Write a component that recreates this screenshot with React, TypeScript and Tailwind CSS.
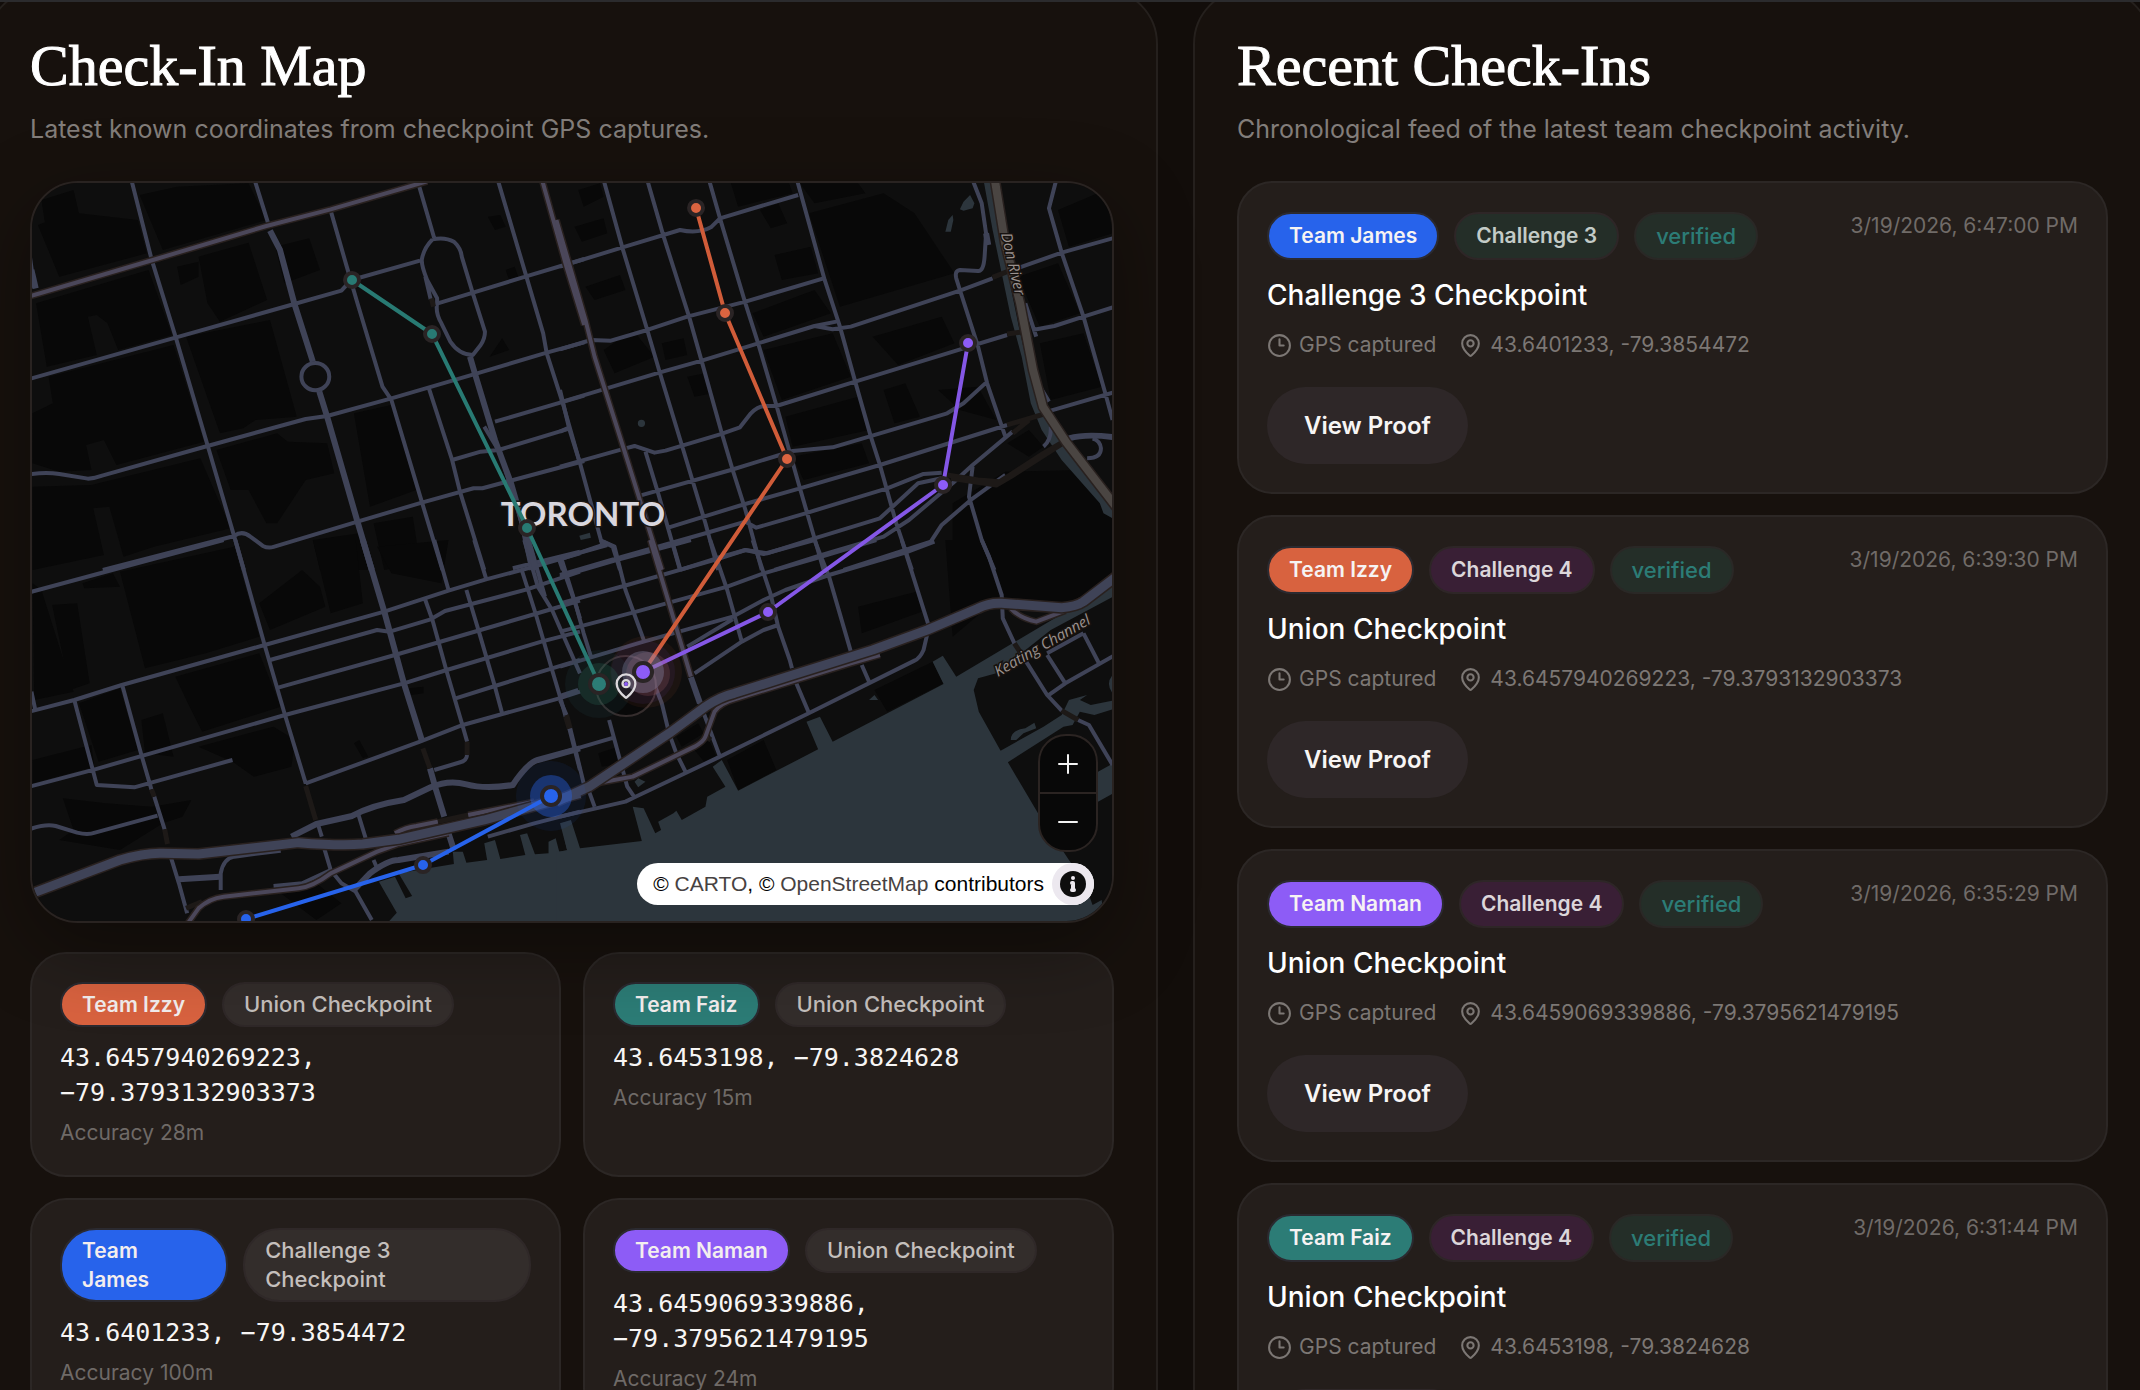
import React from "react";
import { Clock3, MapPin } from "lucide-react";

/* ---------- Data ---------- */

type TeamName = "Team Izzy" | "Team Faiz" | "Team James" | "Team Naman";

const teamColor: Record<TeamName, string> = {
  "Team Izzy": "bg-[#d8623f]",
  "Team Faiz": "bg-[#2c7c76]",
  "Team James": "bg-[#2763eb]",
  "Team Naman": "bg-[#8d5cf6]",
};

const positions: { team: TeamName; place: string; coords: string; accuracy: string }[] = [
  { team: "Team Izzy", place: "Union Checkpoint", coords: "43.6457940269223, −79.3793132903373", accuracy: "Accuracy 28m" },
  { team: "Team Faiz", place: "Union Checkpoint", coords: "43.6453198, −79.3824628", accuracy: "Accuracy 15m" },
  { team: "Team James", place: "Challenge 3 Checkpoint", coords: "43.6401233, −79.3854472", accuracy: "Accuracy 100m" },
  { team: "Team Naman", place: "Union Checkpoint", coords: "43.6459069339886, −79.3795621479195", accuracy: "Accuracy 24m" },
];

const checkIns: { team: TeamName; challenge: 3 | 4; title: string; coords: string; time: string }[] = [
  { team: "Team James", challenge: 3, title: "Challenge 3 Checkpoint", coords: "43.6401233, -79.3854472", time: "3/19/2026, 6:47:00 PM" },
  { team: "Team Izzy", challenge: 4, title: "Union Checkpoint", coords: "43.6457940269223, -79.3793132903373", time: "3/19/2026, 6:39:30 PM" },
  { team: "Team Naman", challenge: 4, title: "Union Checkpoint", coords: "43.6459069339886, -79.3795621479195", time: "3/19/2026, 6:35:29 PM" },
  { team: "Team Faiz", challenge: 4, title: "Union Checkpoint", coords: "43.6453198, -79.3824628", time: "3/19/2026, 6:31:44 PM" },
];

/* ---------- Map drawing ---------- */

interface Tile {
  transform: string;
  blocks: string;
  water: string;
  street: string;
  avenue: string;
  arterial: string;
  highway: string;
  bridge: string;
}

const tiles: Tile[] = [
  {
    transform: "translate(20 170) scale(0.3571 0.3333)",
    blocks:
      "M45 400L360 300 425 495 275 540 245 460 215 435 190 440 215 555 75 590ZM80 620L430 525 515 815 270 885 235 810 185 825 200 900 110 905 35 880 35 730 92 700ZM35 950L200 945 505 865 590 1075 375 1130 290 1160 250 1010 205 1015 235 1155 35 1200ZM500 260L640 218 692 390 560 455 525 400ZM50 165L110 140 165 130 330 150 355 250 110 320ZM335 75L440 50 640 40 690 150 400 240ZM935 730L1040 705 1110 960 980 1010ZM465 500L700 450 775 740 660 750 625 775 560 790ZM715 230L810 205 840 300 740 340ZM1310 140L1345 135 1360 170 1330 180ZM550 840L720 790 750 815 860 820 880 910 800 930 720 1060 690 1060 640 960 590 960ZM60 90L150 60 165 130 70 160ZM1360 300L1385 290 1395 320 1370 330ZM1315 560L1350 505 1370 540ZM820 1110L950 1090 975 1200 840 1200ZM990 1060L1100 1040 1120 1180 1020 1200ZM440 290L500 275 500 320 450 345Z",
    water: "",
    street:
      "M312 30L367 262 372 280 437 505 525 825 600 1100 627 1200M657 30L695 160M870 122L915 290 945 400 1015 650 1040 690 1125 995 1183 1200M20 629L435 503 768 402 900 362 928 330 1120 272M20 914Q70 905 110 912T190 926Q210 925 230 917L525 828 800 747 860 738 1040 685 1280 610 1475 548 1580 517M232 1200L600 1098Q622 1080 645 1100L680 1128Q695 1136 710 1131L945 1055 1125 998 1270 955 1295 955 1580 873M1118 50L1160 205M1155 208Q1190 200 1215 215 1235 235 1237 260L1268 370 1302 485Q1302 505 1290 525L1268 555Q1230 555 1205 515L1180 460Q1163 430 1168 400L1168 385 1140 330Q1125 290 1125 270 1130 235 1155 208M1135 320L1150 388M1170 400L1415 320 1580 267M1338 30L1418 320 1465 490 1475 550 1520 700 1568 880M1145 655L1210 870 1232 965 1300 1200M1210 870L1290 845 1340 840 1540 775M1330 755L1580 677M1300 770L1345 850 1400 1040 1432 1200M1510 1170L1520 1200M1380 1195L1568 1145M20 200L40 355M788 620a39 41 0 1 0 78 0a39 41 0 1 0 -78 0",
    avenue: "M700 182L728 240 768 400 820 575M838 664L860 740 945 1055 985 1200M1260 560L1275 615 1330 810 1375 940 1445 1200M32 300L44 355",
    arterial: "M20 381L372 270 690 168 870 118 1140 34M1462 30L1530 290 1580 465",
    highway: "",
    bridge: "M1152 385L1158 410",
  },
  {
    transform: "translate(560 170) scale(0.3635 0.3333)",
    blocks:
      "M1080 1000L1225 905 1430 900 1520 1020 1520 1200 1080 1200ZM685 130L890 70 975 130 1085 310 770 410ZM550 120L600 100 625 160 580 175ZM70 350L165 315 180 360 95 390ZM590 255L690 230 710 310 610 330ZM530 430L700 360 745 430 560 500ZM560 540L750 490 800 620 610 690ZM620 740L820 680 850 780 640 830ZM860 500L1050 440 1085 520 930 585ZM890 660L950 640 990 740 920 760ZM1260 320L1370 280 1430 430 1320 470ZM1320 520L1440 490 1490 650 1350 690ZM470 40L630 40 640 70 490 110ZM50 60L110 40 120 80 65 110ZM120 540L200 480 260 560 150 610ZM1230 820L1290 780 1330 830 1290 860ZM40 170L120 145 130 190 60 215ZM280 520L340 505 350 555 290 570ZM660 40L820 40 840 70 700 100ZM640 860L830 820 850 880 670 930ZM350 620L400 610 420 670 370 680ZM1370 120L1500 60 1520 190 1400 230ZM1040 660L1150 650 1200 750 1100 720Z",
    water:
      "M1100 118L1110 95 1128 75 1140 100 1135 115 1110 122ZM1060 185L1068 150 1080 135 1082 150 1075 185ZM214 760a10 11 0 1 0 20 0a10 11 0 1 0 -20 0ZM53 1097L82 1088 85 1103 57 1110ZM1165 30L1195 30 1215 220 1262 470 1300 650 1340 750 1400 850 1500 980 1520 1010 1520 1045 1495 1030 1485 1000 1380 870 1325 780 1295 700 1270 560 1240 440 1190 180Z",
    street:
      "M120 30L172 235 240 480 275 610 335 825 400 1060 435 1200M240 30L285 200 355 440 390 575 445 790 475 900 510 1020 555 1200M410 30L440 145 510 400 545 520 595 705 660 955 700 1105 725 1200M652 30L728 330 770 470 812 635 855 800 880 885 925 1060 968 1200M0 290L172 232 330 180Q380 192 415 172L440 145 655 75M0 538L85 510 140 512 240 480 350 440 510 395 725 325M0 697L275 607 390 572 545 520 700 468 760 455M700 468L750 478 800 470 1100 362 1190 325M1265 292L1380 248 1530 202M0 890L180 835 205 828 260 848 290 842 440 793 495 772 525 730Q545 708 565 708L595 708 812 635 1110 535 1230 495M1300 480L1360 468 1440 440 1530 409M220 977L470 900 640 843 750 832 850 800 1065 730 1110 700 1175 635M0 785L20 775M0 660L25 775 55 880 115 1120M300 1072L500 1005 660 955 880 885 1230 765M1350 722L1530 665M0 1168L130 1120M110 1110L145 1130 165 1200M0 1215L155 1165 400 1090 510 1055 540 1073 675 1030 900 955 1000 912 1050 908M330 1200L430 1165 510 1140 570 1150 700 1105 880 1045 985 940 1050 925M590 1200L720 1155 890 1100 960 1050 1080 940 1135 885 1245 785M780 1200L950 1140 1020 1115 1050 1065 1130 990 1225 915M235 845L270 970 330 1200M1135 30L1160 100 1172 190 1168 260Q1165 305 1150 303L1100 300Q1085 302 1090 325L1100 360 1150 530 1175 640 1225 800M1135 890L1125 980 1160 1110 1195 1200M1365 30L1345 115 1380 248 1440 440 1500 670 1520 750M1280 400L1310 500M1315 640L1345 695M1450 865Q1488 865 1488 835 1486 812 1465 806M1350 770Q1352 810 1330 830",
    avenue: "M1400 805Q1450 790 1530 803M1172 190L1178 225",
    arterial: "M-10 150L70 450 95 560 185 870 280 1200",
    highway: "",
    bridge: "M1190 322L1265 290M1230 492L1295 483M1230 765L1345 728M1065 915L1150 930 1210 935 1260 900 1330 850 1400 805M1075 925L1200 945 1240 920 1390 815M1245 790L1290 750",
  },
  {
    transform: "translate(20 540) scale(0.3571 0.3333)",
    blocks:
      "M280 95L600 20 670 290 520 340 350 385ZM35 130L60 150 150 455 40 480ZM435 410L670 340 730 500 510 575 470 490ZM500 620L710 560 770 600 760 680 655 710 595 665ZM165 490L280 445 330 630 220 665ZM35 660L200 615 208 680 35 730ZM120 775L240 790 370 800 480 780 455 830 400 850 280 930 110 900 150 870ZM90 195L160 190 195 430 140 450ZM820 0L940 0 960 190 870 220ZM670 190L790 90 840 140 855 200 700 270ZM1000 20L1200 0 1180 130 1040 100ZM340 540L400 520 430 650 350 640ZM175 130L260 100 280 140 180 145ZM935 610L950 600 975 650 960 655ZM1090 445L1130 440 1130 460 1095 465ZM730 1060L830 1030 900 1090 830 1140Z",
    water:
      "M1020 1160L1055 1118 1005 1025 1050 1010 1080 1075 1098 1068 1060 1000 1215 972 1212 935 1240 935 1250 968 1308 960 1300 910 1330 900 1345 957 1415 945 1400 885 1420 880 1442 943 1480 940 1480 905 1500 895 1510 935 1532 930 1515 850 1540 845 1560 935 1570 935 1570 1160Z",
    street:
      "M20 159L570 0M603 0L685 315 742 525 800 730M1160 0L1200 150M1272 0L1305 115M20 517L152 480 285 435 685 315 1020 215 1200 152 1305 118 1440 80 1568 40M32 455L42 505M700 360L1000 270 1035 275 1150 238 1190 213 1420 148 1568 95M725 442L1050 345 1280 273 1480 210 1568 182M20 742L210 688 742 525 1075 430 1195 390 1460 305 1568 275M1220 475L1330 438 1490 385 1568 360M800 730L1120 605 1240 555 1510 475 1568 455M1135 180L1155 240 1195 395 1240 560 1252 605M1252 645Q1250 662 1235 666L1160 690M1250 150L1285 275 1330 440 1350 520M1405 90L1445 225 1490 390 1515 480 1528 530M1538 565L1568 690M1412 0L1450 140 1490 210 1568 400M1425 0L1470 170M1518 62L1568 235M152 480L215 735 320 742 360 730 595 660M287 438L340 645 368 748M376 770L405 868M422 950L445 1030 468 1120M20 870Q70 850 100 858L160 878Q190 886 210 878L385 827M835 855L845 890M852 925L870 990 900 1030 940 1055 985 1140M948 825L968 895M562 1050L562 1000Q570 955 600 950L730 932M990 960L1000 985M1310 890L1440 850 1568 815M710 1038L790 1030 870 990",
    avenue:
      "M960 0L1020 215 1075 430 1125 600M1148 685L1165 750 1188 830M1200 880L1215 930M760 890L830 852 930 828Q985 795 1075 780L1150 742Q1200 718 1250 733T1380 735Q1420 670 1450 660L1568 625M445 1018L560 1010M935 1050L980 1000Q1030 960 1060 960L1200 935",
    arterial: "M470 1150L500 1105Q530 1075 570 1070L780 1045Q820 1040 870 1000L1000 935 1060 912 1200 880M1050 880Q1080 862 1110 858L1170 845M1255 825L1440 785",
    highway: "M40 1058L280 960Q350 938 400 940L500 942 780 908Q900 918 960 912L1060 898 1300 840 1568 760",
    bridge: "M1128 625L1148 685M1252 605L1252 645M1528 530L1538 565M368 748L376 770M405 868L413 912M800 738L828 840M1170 845L1255 825M465 1105L510 1085",
  },
  {
    transform: "translate(560 540) scale(0.3635 0.3333)",
    blocks:
      "M1060 0L1520 0 1520 110 1400 190 1210 170 1080 290ZM820 200L980 155 995 215 830 280ZM460 660L560 600 595 690 490 750ZM865 450L1025 365 1055 430 900 515ZM370 630L410 600 430 650 400 670ZM320 590L380 550 395 580 335 620ZM105 640L160 620 170 670 115 680Z",
    water:
      "M-10 1160L-10 935 20 933 0 850 30 840 55 925 225 903 200 800 230 805 262 880 278 870 270 845 312 820 320 812 335 840 400 800 405 770 455 740 420 680 445 660 490 752 710 628 678 545 715 530 750 605 1055 432 1025 365 1053 347 1090 410 1530 125 1530 165 1350 270 1200 400 1150 415 1138 450 1152 515 1212 632 1330 560 1380 525 1400 480 1450 465 1430 480 1460 495 1530 480 1530 505 1470 525 1430 515 1410 555 1385 560 1232 667 1315 820 1400 960 1440 1020 1465 1095 1490 1080 1500 1160ZM1480 695L1530 665 1530 755 1480 785ZM1240 600Q1240 570 1280 565L1305 548 1310 565 1275 580 1255 600ZM205 725L215 715 235 725 215 742ZM850 480L865 465 875 480ZM1520 405Q1500 430 1520 460Z",
    street:
      "M360 412L385 490 440 650M0 55L130 15M110 0L150 20 180 150 232 305M0 110L155 60 310 15 360 0M0 60L45 200 65 280 85 350M0 190L185 135 440 55 510 30 560 42 700 0M0 275L210 215 460 140 560 100 720 50 870 0M0 380L230 305 475 230 560 180 620 150 740 105 950 38 1030 5M0 468L50 450M310 10L330 85M413 0L460 150 500 305M530 0L580 165 600 260 632 360 638 385M650 430L685 520M700 0L740 110 800 335M940 0L1015 260 1000 330Q990 355 975 362L680 522 440 650 205 772 180 785 0 830M370 400L500 305 560 270 600 255M350 320L475 238M1160 0L1180 50 1215 165 1218 235 1250 310M1265 335L1340 465 1380 512M1425 540L1455 555 1520 675M0 640L150 592M0 480L18 525M28 565L65 730M135 540L185 740 205 772M262 440L280 490 300 580 320 640 345 695M80 755L95 800M1345 465L1390 430 1530 343M1440 280L1485 375M1340 345L1390 430M1340 340L1440 280M830 375L850 425",
    avenue: "M360 412L385 490",
    arterial: "M248 0L360 410M100 730L200 710 370 620Q395 605 400 590L425 515Q440 490 480 478L800 370 880 345M1240 205Q1265 235 1310 245L1390 212",
    highway: "M-10 785L80 740 300 580 400 500Q440 470 480 460L640 405 860 330 1010 270 1150 205Q1180 188 1215 190L1380 203Q1420 200 1440 185L1530 110",
    bridge: "M1250 310L1265 335M1380 512L1425 540M18 525L28 565M400 590L415 600",
  },
];

const strokes: { key: "street" | "avenue" | "arterial" | "highway" | "bridge"; color: string; width: number }[] = [
  { key: "street", color: "#3f4357", width: 4 },
  { key: "avenue", color: "#3f4357", width: 6 },
  { key: "bridge", color: "#1d1917", width: 5 },
  { key: "arterial", color: "#29211f", width: 7 },
  { key: "arterial", color: "#4b475a", width: 4 },
  { key: "highway", color: "#29211f", width: 12 },
  { key: "highway", color: "#3f4357", width: 9 },
];

const routes = [
  { color: "#287a73", points: [[352, 280], [432, 334], [527, 528], [599, 684]] },
  { color: "#d05c39", points: [[696, 208], [725, 313], [787, 459], [643, 672]] },
  { color: "#8457e6", points: [[968, 343], [943, 485], [768, 612], [643, 672]] },
  { color: "#2763eb", points: [[246, 919], [423, 865], [551, 796]] },
];

const stops = [
  { color: "#287a73", at: [[352, 280], [432, 334], [527, 528]] },
  { color: "#dc6440", at: [[696, 208], [725, 313], [787, 459]] },
  { color: "#8d5cf6", at: [[968, 343], [943, 485], [768, 612]] },
  { color: "#2763eb", at: [[246, 919], [423, 865]] },
];

function CityMap() {
  return (
    <svg viewBox="32 183 1080 738" preserveAspectRatio="xMidYMid slice" className="block h-full w-full" role="img" aria-label="Map of downtown Toronto with team routes">
      <rect x="0" y="150" width="1160" height="800" fill="#0e0e0e" />
      {tiles.map((t) => (
        <path key={t.transform} transform={t.transform} d={t.blocks} fill="#080808" />
      ))}
      {tiles.map((t) => (
        <path key={t.transform} transform={t.transform} d={t.water} fill="#2c353c" />
      ))}
      {strokes.map((s, i) =>
        tiles.map((t) => (
          <path
            key={t.transform + i}
            transform={t.transform}
            d={t[s.key]}
            fill="none"
            stroke={s.color}
            strokeWidth={s.width}
            strokeLinejoin="round"
            vectorEffect="non-scaling-stroke"
          />
        )),
      )}
      <path d="M994 175L1005 243 1020 303 1033 370 1043 407 1066 442 1120 512" fill="none" stroke="#29211f" strokeWidth="11" />
      <path d="M994 175L1005 243 1020 303 1033 370 1043 407 1066 442 1120 512" fill="none" stroke="#4a4542" strokeWidth="8" />
      <circle cx="626" cy="686" r="30" fill="#080808" stroke="#352d2d" strokeWidth="2" />

      <g fontFamily="'Open Sans', 'Noto Sans', sans-serif" fontStyle="italic" fontSize="15" fill="#9a918e" stroke="#17120f" strokeWidth="3" paintOrder="stroke">
        <text transform="translate(1001 234) rotate(77)">Don River</text>
        <text transform="translate(998 677) rotate(-30)">Keating Channel</text>
      </g>
      <text x="583" y="526" textAnchor="middle" fontFamily="Lato, sans-serif" fontWeight="700" fontSize="33" fill="#d9d7de" stroke="#1a1615" strokeWidth="3" paintOrder="stroke">
        TORONTO
      </text>

      {routes.map((r) => (
        <polyline key={r.color} points={r.points.map((p) => p.join(",")).join(" ")} fill="none" stroke={r.color} strokeWidth="4" strokeLinejoin="round" />
      ))}
      {stops.map((s) =>
        s.at.map(([x, y]) => <circle key={`${x}-${y}`} cx={x} cy={y} r="7" fill={s.color} stroke="#2a2425" strokeWidth="4" />),
      )}

      <circle cx="646" cy="672" r="36" fill="#d8623f" opacity="0.07" />
      <circle cx="648" cy="674" r="22" fill="#b86a6a" opacity="0.2" />
      <circle cx="643" cy="672" r="32" fill="#8d5cf6" opacity="0.07" />
      <circle cx="643" cy="672" r="21" fill="#8d8cb0" opacity="0.35" />
      <circle cx="599" cy="684" r="34" fill="#2c5c66" opacity="0.12" />
      <circle cx="599" cy="684" r="21" fill="#2c7c66" opacity="0.22" />
      <circle cx="551" cy="796" r="35" fill="#2763eb" opacity="0.08" />
      <circle cx="551" cy="796" r="21" fill="#2763eb" opacity="0.4" />
      <circle cx="599" cy="684" r="9" fill="#2c7c76" stroke="#2a2425" strokeWidth="4" />
      <circle cx="551" cy="796" r="9" fill="#2763eb" stroke="#2a2425" strokeWidth="4" />
      <circle cx="643" cy="672" r="9" fill="#8d5cf6" stroke="#2a2425" strokeWidth="4" />
      <MapPin x="612" y="672" width="28" height="28" color="#dcd9dc" strokeWidth={2} />
      <circle cx="626" cy="684" r="2" fill="#8d5cf6" />
    </svg>
  );
}

function MapPanel() {
  return (
    <div className="relative mt-8 h-[742px] overflow-hidden rounded-[48px] border-2 border-[#292321] shadow-[0_24px_80px_rgba(0,0,0,0.35)]">
      <CityMap />
      <div className="absolute right-[14px] bottom-[16px] flex flex-col items-end gap-[11px]">
        <div className="flex w-[60px] flex-col overflow-hidden rounded-[28px] border-2 border-[#2b2422] bg-[#080808]">
          <button type="button" aria-label="Zoom in" className="flex h-[56px] items-center justify-center text-[#f2f2f2]">
            <svg width="20" height="20" viewBox="0 0 20 20" stroke="currentColor" strokeWidth="2" strokeLinecap="round">
              <path d="M1 10H19M10 1V19" />
            </svg>
          </button>
          <button type="button" aria-label="Zoom out" className="flex h-[58px] items-center justify-center border-t-2 border-[#2b2422] text-[#f2f2f2]">
            <svg width="20" height="20" viewBox="0 0 20 20" stroke="currentColor" strokeWidth="2" strokeLinecap="round">
              <path d="M1 10H19" />
            </svg>
          </button>
        </div>
        <div className="mr-1 flex h-[42px] items-center gap-2 rounded-full bg-white pl-4 font-['Liberation_Sans',Arial,sans-serif] text-[21px] text-black">
          <p className="whitespace-nowrap">
            © <a href="#carto" className="text-[#474242]">CARTO</a>, © <a href="#osm" className="text-[#474242]">OpenStreetMap</a> contributors
          </p>
          <button type="button" aria-label="Toggle attribution" className="flex size-[42px] items-center justify-center rounded-full bg-[#ece8ef]">
            <svg width="26" height="26" viewBox="0 0 26 26">
              <circle cx="13" cy="13" r="13" fill="#0e0e0e" />
              <circle cx="13" cy="7" r="2" fill="#ece8ef" />
              <path d="M12 12H13V19M12 19H14" fill="none" stroke="#ece8ef" strokeWidth="4" strokeLinecap="round" strokeLinejoin="round" />
            </svg>
          </button>
        </div>
      </div>
    </div>
  );
}

/* ---------- Cards ---------- */

function Panel({ title, subtitle, children }: { title: string; subtitle: string; children: React.ReactNode }) {
  return (
    <section className="min-w-0 rounded-[56px] border-2 border-[#25201d] bg-[#17110d] px-[42px] pt-[42px] pb-[42px]">
      <h2 className="font-['Liberation_Serif',serif] text-[58px] leading-[68px] text-white [-webkit-text-stroke:1px_white]">{title}</h2>
      <p className="mt-[9px] text-[25px] leading-[40px] text-[#827d7a]">{subtitle}</p>
      {children}
    </section>
  );
}

function PositionCard({ team, place, coords, accuracy }: (typeof positions)[number]) {
  return (
    <article className="rounded-[36px] border-2 border-[#2c2725] bg-[#241e1b] p-[28px]">
      <div className="flex items-stretch gap-[15px] text-[21px] leading-[29px]">
        <span className={`rounded-[36px] border-2 border-[#2b2a30] px-5 py-[6px] font-semibold text-[#f3eeee] ${teamColor[team]}`}>{team}</span>
        <span className="rounded-[36px] border-2 border-[#2f2828] bg-[#332d2b] px-5 py-[6px] text-[22px] font-medium text-[#c4bfbc]">{place}</span>
      </div>
      <p className="mt-[13px] font-['DejaVu_Sans_Mono',monospace] text-[25px] leading-[35px] text-[#f7f5f4]">{coords}</p>
      <p className="mt-[9px] text-[21px] leading-[28px] text-[#6f6a67]">{accuracy}</p>
    </article>
  );
}

function CheckInCard({ team, challenge, title, coords, time }: (typeof checkIns)[number]) {
  return (
    <article className="rounded-[36px] border-2 border-[#2c2725] bg-[#241e1b] px-[28px] pt-[29px] pb-[28px]">
      <div className="flex items-start justify-between">
        <div className="flex gap-[15px] text-[21px] leading-[32px]">
          <span className={`rounded-full border-2 border-[#2b2a30] px-5 py-[6px] font-semibold text-[#f6f3f3] ${teamColor[team]}`}>{team}</span>
          <span
            className={`rounded-full border-2 border-[#2e2627] px-5 py-[6px] font-semibold ${challenge === 3 ? "bg-[#242e28] text-[#c3cbc7]" : "bg-[#391f35] text-[#dcd6da]"}`}
          >
            Challenge {challenge}
          </span>
          <span className="rounded-full border-2 border-[#2a2826] bg-[#242e28] px-5 py-[6px] text-[22px] font-medium text-[#2c7c76]">verified</span>
        </div>
        <time className="text-[21px] leading-[28px] text-[#706b68]">{time}</time>
      </div>
      <h3 className="mt-[14px] text-[28px] leading-[42px] font-medium text-white">{title}</h3>
      <div className="mt-[13px] flex items-center gap-[22px] text-[21px] leading-[32px] text-[#7c7774]">
        <span className="flex items-center gap-[7px]">
          <Clock3 size={25} strokeWidth={2} />
          GPS captured
        </span>
        <span className="flex items-center gap-[7px]">
          <MapPin size={25} strokeWidth={2} />
          {coords}
        </span>
      </div>
      <button type="button" className="mt-[26px] block h-[77px] rounded-full bg-[#2e2728] px-[37px] text-[24px] font-semibold text-[#f7f5f4]">
        View Proof
      </button>
    </article>
  );
}

export default function App() {
  return (
    <main className="h-screen overflow-hidden bg-[#120d0a] font-['Inter',sans-serif]">
      <div className="relative z-10 h-[2px] bg-[#2b2b2d]" />
      <div className="-mt-[14px] -mr-[12px] -ml-[14px] grid grid-cols-[1.1fr_0.9fr] items-start gap-[35px]">
        <Panel title="Check-In Map" subtitle="Latest known coordinates from checkpoint GPS captures.">
          <MapPanel />
          <div className="mt-[29px] grid grid-cols-2 gap-x-[22px] gap-y-[21px]">
            {positions.map((p) => (
              <PositionCard key={p.team} {...p} />
            ))}
          </div>
        </Panel>
        <Panel title="Recent Check-Ins" subtitle="Chronological feed of the latest team checkpoint activity.">
          <div className="mt-8 flex flex-col gap-[21px]">
            {checkIns.map((c) => (
              <CheckInCard key={c.team} {...c} />
            ))}
          </div>
        </Panel>
      </div>
    </main>
  );
}
